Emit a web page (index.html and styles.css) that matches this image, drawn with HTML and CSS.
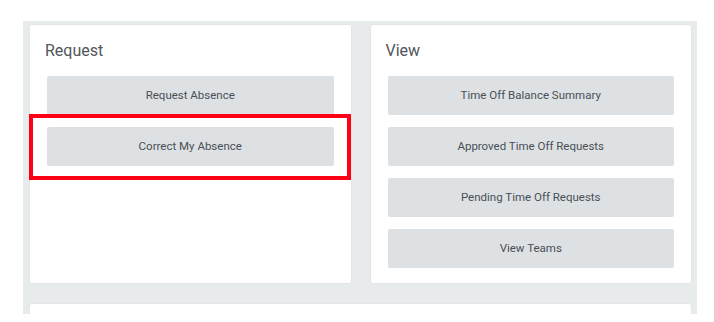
FILE: index.html
```html
<!DOCTYPE html>
<html lang="en">
<head>
  <meta charset="UTF-8" />
  <meta name="viewport" content="width=device-width, initial-scale=1.0"/>
  <title>Absence</title>
  <link rel="stylesheet" href="styles.css">
</head>
<body>
  <div class="Board">
    <div class="Row">
      <div class="Card">
        <h2 class="Title">Request</h2>
        <div class="Actions">
          <button class="action">Request Absence</button>
          <button class="action">Correct My Absence</button>
        </div>
        <div class="highlight"></div>
      </div>
      <div class="Card">
        <h2 class="Title">View</h2>
        <div class="Actions">
          <button class="action">Time Off Balance Summary</button>
          <button class="action">Approved Time Off Requests</button>
          <button class="action">Pending Time Off Requests</button>
          <button class="action">View Teams</button>
        </div>
      </div>
    </div>
    <div class="Card wide"></div>
  </div>
</body>
</html>
```

FILE: styles.css
```css
* {
  margin: 0;
  padding: 0;
  box-sizing: border-box;
}
html, body {
  width: 100%;
  height: 100%;
  background-color: #fff;
  font-family: Roboto, "Liberation Sans", sans-serif;
}

.Board {
  margin: 21px 17px 0 23px;
  padding: 3px 5px 0 6px;
  height: 293px;
  overflow: hidden;
  background-color: #e8ebec;
}

.Row {
  display: flex;
  gap: 18px;
}

.Card {
  position: relative;
  flex: 1;
  height: 260px;
  background-color: #fff;
  border: 1px solid #e3e6e8;
  border-radius: 3px;
  padding: 16px 17px 0 17px;
}

.Card.wide {
  margin-top: 19px;
  height: 40px;
}

.Title {
  font-size: 16px;
  line-height: 20px;
  font-weight: 400;
  color: #4f555b;
  margin: 0 0 15px -2px;
}

.Actions {
  display: flex;
  flex-direction: column;
  gap: 12px;
}

.action {
  height: 39px;
  padding-bottom: 1px;
  border: none;
  border-radius: 2px;
  background-color: #dde1e4;
  color: #4a4f55;
  font-family: inherit;
  font-size: 11.5px;
  text-align: center;
}

/* red annotation box drawn over the card */
.highlight {
  position: absolute;
  left: -1px;
  top: 89px;
  width: 322px;
  height: 66px;
  border: 4px solid #fe0016;
}
```
